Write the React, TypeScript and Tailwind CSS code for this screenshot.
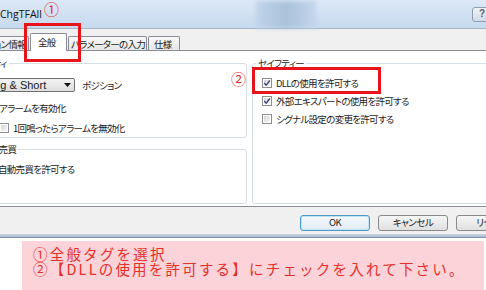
import React from "react";

function Check({ checked = false }: { checked?: boolean }) {
  return (
    <span className="flex h-[10px] w-[10px] shrink-0 items-center justify-center border border-[#8f8f8f] bg-white p-px">
      <span className="relative flex h-full w-full items-center justify-center bg-linear-to-br from-[#d4d4d4] to-[#f7f7f7]">
        {checked && (
          <svg viewBox="0 0 8 8" className="absolute h-[8px] w-[8px]">
            <path d="M1.2 4.1 L3.2 6.2 L6.9 1.5" fill="none" stroke="#3b4d7c" strokeWidth="1.4" />
          </svg>
        )}
      </span>
    </span>
  );
}

function CheckRow({ checked, label, className }: { checked?: boolean; label: string; className: string }) {
  return (
    <div className={`flex h-[14px] items-center gap-[4px] ${className}`}>
      <Check checked={checked} />
      <span className="whitespace-nowrap text-[9.5px] leading-[14px] tracking-[-0.7px]">{label}</span>
    </div>
  );
}

function Btn({ children, primary = false }: { children: React.ReactNode; primary?: boolean }) {
  return (
    <div
      className={
        primary
          ? "flex h-[16px] w-[70px] shrink-0 items-center justify-center rounded-[3px] border border-[#4d9bc9] bg-linear-to-b from-[#f4f9fc] to-[#e2ecf3] text-[9.5px] leading-none tracking-[-0.5px] shadow-[inset_0_0_0_1px_#bfe2f7]"
          : "flex h-[16px] w-[70px] shrink-0 items-center justify-center rounded-[3px] border border-[#8a8a8a] bg-linear-to-b from-[#f6f6f6] to-[#e0e0e0] text-[9.5px] leading-none tracking-[-0.5px]"
      }
    >
      {children}
    </div>
  );
}

export default function App() {
  return (
    <div className="relative h-[290px] w-[486px] overflow-hidden bg-white font-['Noto_Sans_CJK_JP',sans-serif] [font-feature-settings:'palt'] text-[#1b1b1b]">
      {/* window */}
      <div className="flex flex-col">
        {/* title bar */}
        <div className="flex h-[29px] items-center border-b border-[#a3b4c6] bg-linear-to-b from-[#dce8f6] to-[#c7daef]">
          <span className="w-[40px] shrink-0 whitespace-nowrap font-['Open_Sans',sans-serif] text-[10.5px] leading-none text-[#111]">
            ChgTFAll
          </span>
          <div className="ml-[216px] h-[27px] w-[60px] shrink-0 bg-linear-to-r from-[#c0d4ea] via-[#a9c1da] to-[#c3d6ec] blur-[2px]" />
          <div className="ml-auto -mr-[6px] flex h-[15px] w-[20px] shrink-0 items-center justify-center rounded-[3px] border border-[#8d9db1] bg-linear-to-b from-[#eef3f8] to-[#cfdbe8] font-['Liberation_Sans',sans-serif] text-[10px] font-bold leading-none text-[#56606c]">
            ?
          </div>
        </div>

        {/* tab strip */}
        <div className="-ml-[40px] flex h-[21px] items-end bg-[#f0f0f0] text-[9.5px] tracking-[-0.7px]">
          <div className="flex h-[14px] w-[69px] shrink-0 items-center justify-end whitespace-nowrap rounded-t-[2px] border border-b-0 border-[#898c95] bg-linear-to-b from-[#f9f9f9] to-[#e7e7e7] pr-[2px] leading-[14px]">
            バージョン情報
          </div>
          <div className="relative z-10 -mb-px ml-px flex h-[18px] w-[37px] shrink-0 items-start rounded-t-[2px] border border-b-0 border-[#898c95] bg-white pl-[7px] pt-px leading-[14px]">
            全般
          </div>
          <div className="ml-px flex h-[14px] w-[79px] shrink-0 items-center whitespace-nowrap rounded-t-[2px] border border-b-0 border-[#898c95] bg-linear-to-b from-[#f9f9f9] to-[#e7e7e7] pl-[2px] leading-[14px]">
            パラメーターの入力
          </div>
          <div className="ml-px flex h-[14px] w-[32px] shrink-0 items-center rounded-t-[2px] border border-b-0 border-[#898c95] bg-linear-to-b from-[#f9f9f9] to-[#e7e7e7] pl-[5px] leading-[14px]">
            仕様
          </div>
        </div>

        {/* tab page */}
        <div className="flex h-[157px] gap-[5px] border-y border-[#898c95] bg-white pt-[5px]">
          <div className="-ml-[44px] flex w-[291px] shrink-0 flex-col gap-[4px]">
            <fieldset className="h-[82px] rounded-[3px] border border-[#d5dfe5]">
              <legend className="ml-[10px] px-[2px] text-[9.5px] leading-[14px] tracking-[-0.7px]">セーフティ</legend>
              <div className="ml-[19px] mt-[8px] flex h-[14px] items-center gap-[7px]">
                <div className="flex h-[14px] w-[99px] shrink-0 items-center justify-between rounded-[2px] border border-[#707070] bg-linear-to-b from-[#f4f4f4] to-[#dedede] pl-[5px] pr-[3px] font-['Liberation_Sans',sans-serif] text-[11px] leading-none">
                  <span className="whitespace-nowrap">Long &amp; Short</span>
                  <svg width="7" height="4" viewBox="0 0 7 4">
                    <path d="M0 0H7L3.5 4Z" fill="#111" />
                  </svg>
                </div>
                <span className="whitespace-nowrap text-[9.5px] leading-[14px] tracking-[-0.7px]">ポジション</span>
              </div>
              <CheckRow label="アラームを有効化" className="ml-[28px] mt-[9px]" />
              <CheckRow label="1回鳴ったらアラームを無効化" className="ml-[42px] mt-[6px]" />
            </fieldset>
            <fieldset className="h-[62px] rounded-[3px] border border-[#d5dfe5]">
              <legend className="ml-[22px] px-[2px] text-[9.5px] leading-[14px] tracking-[-0.7px]">自動売買</legend>
              <CheckRow label="自動売買を許可する" className="ml-[27px] mt-[6px]" />
            </fieldset>
          </div>
          <fieldset className="h-[148px] w-[260px] shrink-0 rounded-[3px] border border-[#d5dfe5]">
            <legend className="ml-[3px] px-[2px] text-[9.5px] leading-[14px] tracking-[-0.7px]">セイフティー</legend>
            <div className="ml-[9px] mt-[6px] flex flex-col gap-[4px]">
              <CheckRow checked label="DLLの使用を許可する" className="" />
              <CheckRow checked label="外部エキスパートの使用を許可する" className="" />
              <CheckRow label="シグナル設定の変更を許可する" className="" />
            </div>
          </fieldset>
        </div>

        {/* buttons */}
        <div className="flex h-[27px] items-start gap-[8px] bg-[#f0f0f0] pl-[300px] pt-[8px]">
          <Btn primary>OK</Btn>
          <Btn>キャンセル</Btn>
          <Btn>リセット</Btn>
        </div>

        {/* frame bottom */}
        <div className="h-[4px] border-b border-[#7f95ad] bg-linear-to-b from-[#cbd8e5] to-[#a9bcd0]" />
      </div>

      {/* note */}
      <div className="ml-[22px] mt-[3px] h-[49px] w-[462px] bg-[#fbd3d9] pl-[11px] pt-[5px] text-[14.5px] leading-[15px] tracking-[2.2px] text-[#e5302a] [font-feature-settings:normal]">
        <div className="whitespace-nowrap">①全般タグを選択</div>
        <div className="whitespace-nowrap">②【DLLの使用を許可する】にチェックを入れて下さい。</div>
      </div>

      {/* annotations */}
      <div className="absolute left-[24px] top-[23px] h-[39px] w-[57px] border-[3px] border-[#e8141c]" />
      <div className="absolute left-[252px] top-[67px] h-[27px] w-[129px] border-[3px] border-[#e8141c]" />
      <div className="absolute left-[44px] top-[1px] text-[15px] leading-none text-[#e5302a] [font-feature-settings:normal]">①</div>
      <div className="absolute left-[231px] top-[71px] text-[15px] leading-none text-[#e5302a] [font-feature-settings:normal]">②</div>
    </div>
  );
}
